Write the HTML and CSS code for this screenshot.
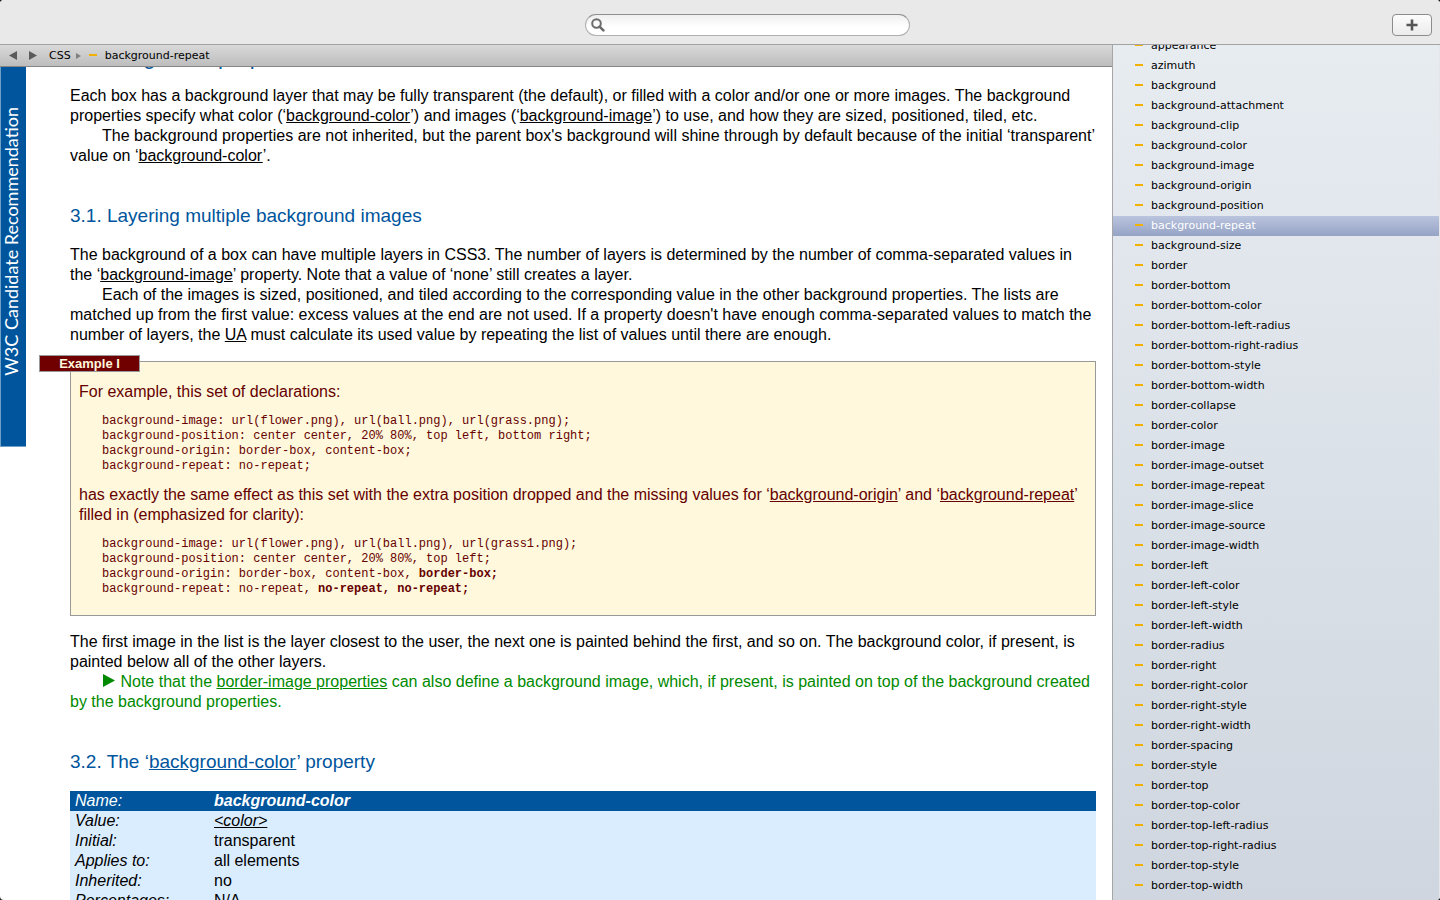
FILE: index.html
```html
<!DOCTYPE html>
<html lang="en">
<head>
  <meta charset="UTF-8">
  <meta name="viewport" content="width=device-width, initial-scale=1.0">
  <title>background-repeat</title>
  <link rel="stylesheet" href="styles.css">
</head>
<body>
  <header class="toolbar">
    <label class="search">
      <svg class="search-icon" viewBox="0 0 14 14" aria-hidden="true">
        <circle cx="5.5" cy="5.5" r="4.3" fill="none" stroke="#6b6b6b" stroke-width="2"/>
        <path d="M8.6 8.6L12.4 12.4" stroke="#6b6b6b" stroke-width="2.6" stroke-linecap="round"/>
      </svg>
      <input type="search" class="search-input" aria-label="Search">
    </label>
    <button type="button" class="add-button" aria-label="New tab">
      <svg viewBox="0 0 12 12" aria-hidden="true"><path d="M6 0.5V11.5M0.5 6H11.5" stroke="#555" stroke-width="2.6"/></svg>
    </button>
  </header>

  <div class="window">
    <div class="viewer">
      <nav class="pathbar">
        <button type="button" class="nav-button" aria-label="Back"><svg viewBox="0 0 8 9"><path d="M8 0V9L0 4.5Z" fill="#5b5b5b"/></svg></button>
        <button type="button" class="nav-button" aria-label="Forward"><svg viewBox="0 0 8 9"><path d="M0 0V9L8 4.5Z" fill="#5b5b5b"/></svg></button>
        <a href="#" class="crumb">CSS</a>
        <svg class="crumb-arrow" viewBox="0 0 5 6"><path d="M0 0V6L5 3Z" fill="#808080"/></svg>
        <a href="#" class="crumb crumb-property">background-repeat</a>
      </nav>

      <div class="page">
        <div class="status"><span>W3C Candidate Recommendation</span></div>
        <main class="spec">
          <h2>3. Background properties</h2>
          <p>Each box has a background layer that may be fully transparent (the default), or filled with a color and/or one or more images. The background properties specify what color (‘<a href="#">background-color</a>’) and images (‘<a href="#">background-image</a>’) to use, and how they are sized, positioned, tiled, etc.</p>
          <p>The background properties are not inherited, but the parent box's background will shine through by default because of the initial ‘transparent’ value on ‘<a href="#">background-color</a>’.</p>

          <h3>3.1. Layering multiple background images</h3>
          <p>The background of a box can have multiple layers in CSS3. The number of layers is determined by the number of comma-separated values in the ‘<a href="#">background-image</a>’ property. Note that a value of ‘none’ still creates a layer.</p>
          <p>Each of the images is sized, positioned, and tiled according to the corresponding value in the other background properties. The lists are matched up from the first value: excess values at the end are not used. If a property doesn't have enough comma-separated values to match the number of layers, the <a href="#">UA</a> must calculate its used value by repeating the list of values until there are enough.</p>

          <div class="example">
            <span class="example-label">Example I</span>
            <p>For example, this set of declarations:</p>
            <pre>background-image: url(flower.png), url(ball.png), url(grass.png);
background-position: center center, 20% 80%, top left, bottom right;
background-origin: border-box, content-box;
background-repeat: no-repeat;</pre>
            <p>has exactly the same effect as this set with the extra position dropped and the missing values for ‘<a href="#">background-origin</a>’ and ‘<a href="#">background-repeat</a>’ filled in (emphasized for clarity):</p>
            <pre>background-image: url(flower.png), url(ball.png), url(grass1.png);
background-position: center center, 20% 80%, top left;
background-origin: border-box, content-box, <strong>border-box;</strong>
background-repeat: no-repeat, <strong>no-repeat, no-repeat;</strong></pre>
          </div>

          <p>The first image in the list is the layer closest to the user, the next one is painted behind the first, and so on. The background color, if present, is painted below all of the other layers.</p>
          <p class="note"><svg class="note-mark" viewBox="0 0 12 13"><path d="M0 0V13L12 6.5Z" fill="#008a00"/></svg> Note that the <a href="#">border-image properties</a> can also define a background image, which, if present, is painted on top of the background created by the background properties.</p>

          <h3>3.2. The ‘<a href="#">background-color</a>’ property</h3>
          <table class="propdef">
            <tr><th>Name:</th><td>background-color</td></tr>
            <tr><th>Value:</th><td><a href="#"><i>&lt;color&gt;</i></a></td></tr>
            <tr><th>Initial:</th><td>transparent</td></tr>
            <tr><th>Applies to:</th><td>all elements</td></tr>
            <tr><th>Inherited:</th><td>no</td></tr>
            <tr><th>Percentages:</th><td>N/A</td></tr>
          </table>
        </main>
      </div>
    </div>

    <aside class="sidebar">
      <ul>
        <li><a href="#">appearance</a></li>
        <li><a href="#">azimuth</a></li>
        <li><a href="#">background</a></li>
        <li><a href="#">background-attachment</a></li>
        <li><a href="#">background-clip</a></li>
        <li><a href="#">background-color</a></li>
        <li><a href="#">background-image</a></li>
        <li><a href="#">background-origin</a></li>
        <li><a href="#">background-position</a></li>
        <li class="selected"><a href="#">background-repeat</a></li>
        <li><a href="#">background-size</a></li>
        <li><a href="#">border</a></li>
        <li><a href="#">border-bottom</a></li>
        <li><a href="#">border-bottom-color</a></li>
        <li><a href="#">border-bottom-left-radius</a></li>
        <li><a href="#">border-bottom-right-radius</a></li>
        <li><a href="#">border-bottom-style</a></li>
        <li><a href="#">border-bottom-width</a></li>
        <li><a href="#">border-collapse</a></li>
        <li><a href="#">border-color</a></li>
        <li><a href="#">border-image</a></li>
        <li><a href="#">border-image-outset</a></li>
        <li><a href="#">border-image-repeat</a></li>
        <li><a href="#">border-image-slice</a></li>
        <li><a href="#">border-image-source</a></li>
        <li><a href="#">border-image-width</a></li>
        <li><a href="#">border-left</a></li>
        <li><a href="#">border-left-color</a></li>
        <li><a href="#">border-left-style</a></li>
        <li><a href="#">border-left-width</a></li>
        <li><a href="#">border-radius</a></li>
        <li><a href="#">border-right</a></li>
        <li><a href="#">border-right-color</a></li>
        <li><a href="#">border-right-style</a></li>
        <li><a href="#">border-right-width</a></li>
        <li><a href="#">border-spacing</a></li>
        <li><a href="#">border-style</a></li>
        <li><a href="#">border-top</a></li>
        <li><a href="#">border-top-color</a></li>
        <li><a href="#">border-top-left-radius</a></li>
        <li><a href="#">border-top-right-radius</a></li>
        <li><a href="#">border-top-style</a></li>
        <li><a href="#">border-top-width</a></li>
      </ul>
    </aside>
  </div>
</body>
</html>
```
FILE: styles.css
```css
* {
  box-sizing: border-box;
}

html {
  background: #222;
}

body {
  margin: 0;
  height: 100vh;
  display: flex;
  flex-direction: column;
  overflow: hidden;
  border-radius: 4px;
  background: #fff;
  color: #000;
  font: 16px/20px "Liberation Sans", Helvetica, Arial, sans-serif;
}

a {
  color: inherit;
}

button {
  padding: 0;
  border: 0;
  background: none;
}

svg {
  display: block;
}

/* Toolbar */
.toolbar {
  flex: none;
  height: 45px;
  padding: 5px 8px 0 63px;
  display: grid;
  grid-template-columns: 1fr 325px 1fr;
  align-items: center;
  background: #e9e9e9;
  border-bottom: 1px solid #a3a3a3;
}

.search {
  grid-column: 2;
  display: flex;
  align-items: center;
  gap: 4px;
  height: 22px;
  padding: 0 8px 0 5px;
  border: 1px solid #b0b0b0;
  border-top-color: #8e8e8e;
  border-radius: 11px;
  background: linear-gradient(#efefef, #fff 60%);
}

.search-icon {
  width: 14px;
  height: 14px;
}

.search-input {
  flex: 1;
  min-width: 0;
  border: 0;
  outline: 0;
  background: none;
  font-size: 13px;
}

.add-button {
  justify-self: end;
  display: flex;
  align-items: center;
  justify-content: center;
  width: 40px;
  height: 22px;
  border: 1px solid #8c8c8c;
  border-radius: 4px;
  background: linear-gradient(#fcfcfc, #ececec);
}

.add-button svg {
  width: 12px;
  height: 12px;
}

.window {
  flex: 1;
  min-height: 0;
  display: flex;
}

.viewer {
  flex: 1;
  min-width: 0;
  display: flex;
  flex-direction: column;
}

/* Path bar */
.pathbar {
  flex: none;
  display: flex;
  align-items: center;
  height: 22px;
  padding-left: 9px;
  border-bottom: 1px solid #868686;
  background: linear-gradient(#d9d9d9, #bdbdbd);
  font: 11px/20px "DejaVu Sans", sans-serif;
}

.nav-button {
  width: 8px;
  margin-right: 12px;
}

.crumb {
  text-decoration: none;
}

.crumb-arrow {
  width: 5px;
  height: 6px;
  margin: 0 8px 0 5px;
}

.crumb-property::before,
.sidebar a::before {
  content: "";
  display: inline-block;
  width: 8px;
  height: 2px;
  margin-right: 8px;
  vertical-align: 3px;
  background: #f2b100;
}

/* Document */
.page {
  flex: 1;
  min-height: 0;
  display: flex;
  align-items: flex-start;
  overflow: hidden;
}

.status {
  flex: none;
  width: 26px;
  height: 380px;
  display: flex;
  justify-content: center;
  padding: 40px 5px 0 0;
  border: 1px solid #6fa0c8;
  border-width: 0 0 1px 1px;
  background: #00559d;
  color: #fff;
  font: 18px/20px Lato, sans-serif;
}

.status span {
  writing-mode: vertical-rl;
  transform: rotate(180deg);
  white-space: nowrap;
  height: max-content;
}

.spec {
  flex: 1;
  min-width: 0;
  margin-top: -22px;
  padding: 0 16px 0 44px;
}

.spec h2,
.spec h3 {
  color: #00559d;
  font-weight: normal;
}

.spec h2 {
  margin: 0 0 17px;
  font-size: 22px;
  line-height: 24px;
}

.spec h3 {
  margin: 38px 0 18px;
  font-size: 19px;
  line-height: 23px;
}

.spec p {
  margin: 0;
}

.spec p + p {
  text-indent: 32px;
}

.example {
  position: relative;
  margin: 16px 0;
  padding: 20px 8px 18px;
  border: 1px solid #999;
  background: #fff8dc;
  color: #600;
}

.example-label {
  position: absolute;
  top: -7px;
  left: -32px;
  width: 101px;
  border: 1px solid #999;
  background: #700000;
  color: #fff8dc;
  font: bold 13px/15px "Liberation Sans", Arial, sans-serif;
  text-align: center;
}

.example pre {
  margin: 12px 0 11px 23px;
  font: 12px/15px "Liberation Mono", Courier, monospace;
}

.example pre:last-child {
  margin-bottom: 0;
}

.spec .note {
  color: #008a00;
}

.note-mark {
  display: inline-block;
  width: 14px;
  height: 13px;
}

.propdef {
  width: 100%;
  border-collapse: collapse;
  background: #daedff;
}

.propdef th,
.propdef td {
  padding: 0 4px;
  text-align: left;
}

.propdef th {
  width: 140px;
  padding-left: 5px;
  font-weight: normal;
  font-style: italic;
}

.propdef tr:first-child {
  background: #00559d;
  color: #fff;
}

.propdef tr:first-child td {
  font-style: italic;
  font-weight: bold;
}

/* Property list */
.sidebar {
  flex: none;
  width: 328px;
  overflow: hidden;
  border-left: 1px solid #a6a6a6;
  border-right: 1px solid #e4e6ea;
  background: linear-gradient(#e7ecf1, #cfd6df);
  font: 11px/20px "DejaVu Sans", sans-serif;
}

.sidebar ul {
  margin: -9px 0 0;
  padding: 0;
  list-style: none;
}

.sidebar a {
  display: block;
  padding-left: 22px;
  text-decoration: none;
}

.sidebar .selected {
  background: linear-gradient(#bac4de, #95a3c5);
  color: #fff;
}
```
